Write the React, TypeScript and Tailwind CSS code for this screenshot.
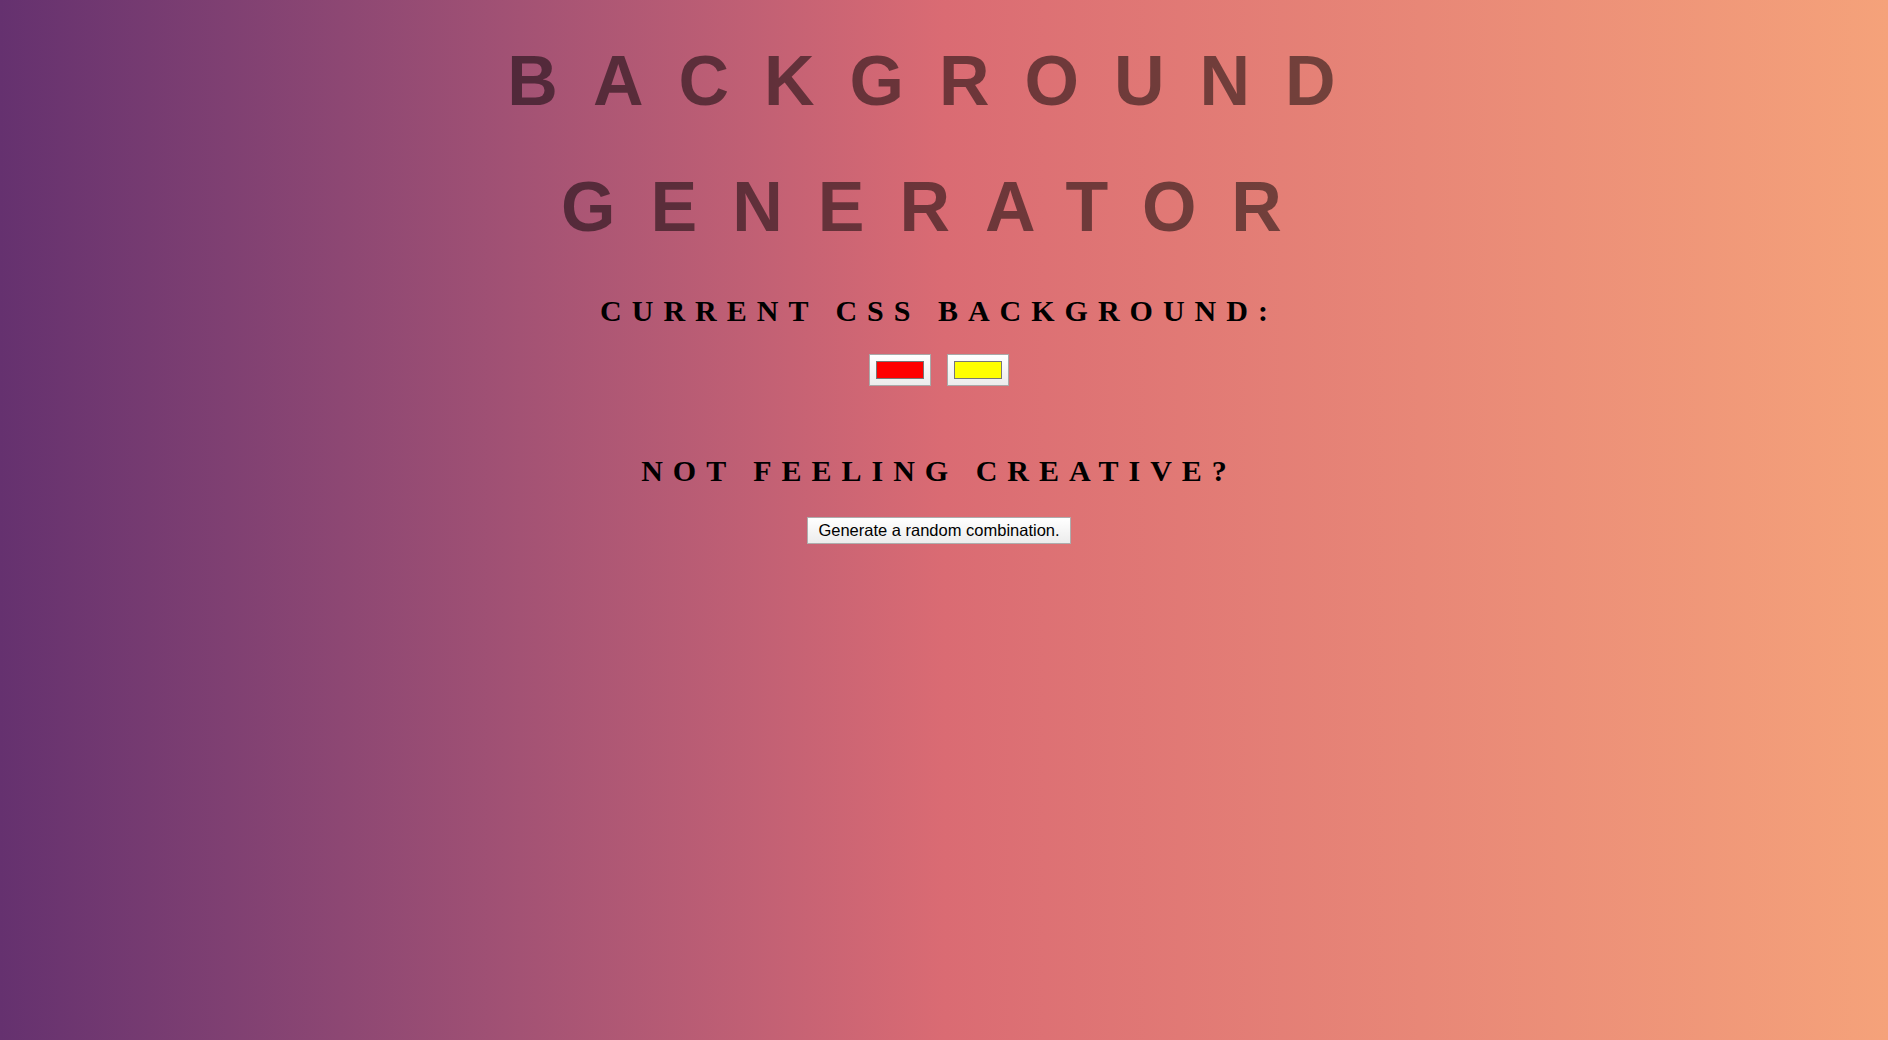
import React, { useState } from "react";

const randomHex = () =>
  "#" +
  Math.floor(Math.random() * 0xffffff)
    .toString(16)
    .padStart(6, "0");

function ColorSwatch({
  value,
  onChange,
}: {
  value: string;
  onChange: (v: string) => void;
}) {
  return (
    <label className="relative block w-[62px] h-[32px] border border-[#a9a9a9] bg-gradient-to-b from-white to-[#ececec] px-[6px] py-[6px] cursor-pointer">
      <div
        className="w-full h-full border border-[#777777]"
        style={{ backgroundColor: value }}
      />
      <input
        type="color"
        value={value}
        onChange={(e) => onChange(e.target.value)}
        className="absolute inset-0 w-full h-full opacity-0 cursor-pointer"
      />
    </label>
  );
}

export default function App() {
  const [color1, setColor1] = useState("#ff0000");
  const [color2, setColor2] = useState("#ffff00");

  const randomize = () => {
    setColor1(randomHex());
    setColor2(randomHex());
  };

  return (
    <div className="min-h-[1040px] w-full pr-[10px] bg-gradient-to-r from-[#65316f] via-[#da6b73] to-[#f5a27a] text-center">
      {/* Titre */}
      <h1 className="pt-[18px] mx-auto w-[900px] font-['Liberation_Sans',Arial,sans-serif] font-bold text-[70px] leading-[126px] tracking-[35px] text-black/50 uppercase">
        Background Generator
      </h1>

      <h3 className="mt-[24px] font-['Liberation_Serif','Times_New_Roman',serif] font-bold text-[30px] leading-[34px] tracking-[10px] text-black uppercase">
        Current CSS Background:
      </h3>

      <div className="mt-[26px] flex justify-center gap-[16px]">
        <ColorSwatch value={color1} onChange={setColor1} />
        <ColorSwatch value={color2} onChange={setColor2} />
      </div>

      <h3 className="mt-[68px] font-['Liberation_Serif','Times_New_Roman',serif] font-bold text-[30px] leading-[34px] tracking-[10px] text-black uppercase">
        Not feeling creative?
      </h3>

      <div className="mt-[29px] flex justify-center">
        <button
          onClick={randomize}
          className="h-[27px] px-[10px] border border-[#adadad] bg-gradient-to-b from-white to-[#ececec] font-['Liberation_Sans',Arial,sans-serif] text-[16.5px] leading-none text-black"
        >
          Generate a random combination.
        </button>
      </div>
    </div>
  );
}
